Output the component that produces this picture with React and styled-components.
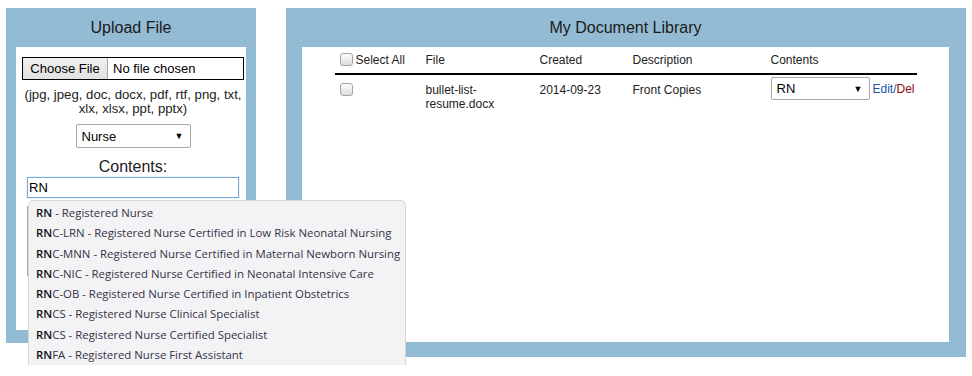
import styled, { createGlobalStyle } from "styled-components";

const GlobalStyle = createGlobalStyle`
    body {
        margin: 0;
        background: #ffffff;
        font-family: "Liberation Sans", Arial, sans-serif;
        color: #222222;
    }
`

const Page = styled.div`
    display: flex;
    align-items: flex-start;
    gap: 30px;
    padding: 8px 6px;
`
const Panel = styled.div`
    width: ${(props) => props.width}px;
    height: ${(props) => props.height}px;
    background-color: #94bbd4;
    display: flex;
    flex-direction: column;
    padding: 0 ${(props) => props.right}px ${(props) => props.bottom}px ${(props) => props.left}px;
    box-sizing: border-box;
`
const PanelTitle = styled.div`
    height: 39px;
    display: flex;
    align-items: center;
    justify-content: center;
    font-size: 16px;
    color: #1a1a1a;
`
const PanelBody = styled.div`
    flex: 1;
    background: #ffffff;
    display: flex;
    flex-direction: column;
    align-items: center;
    padding: ${(props) => props.pad};
    box-sizing: border-box;
`

const FileInput = styled.div`
    width: 222px;
    height: 23px;
    border: 1px solid #000000;
    box-sizing: border-box;
    display: flex;
    align-items: center;
    font-size: 13px;
    color: #000;
`
const FileButton = styled.div`
    height: 21px;
    width: 85px;
    background: linear-gradient(#f0f0f0, #e1e1e1);
    border-right: 1px solid #a7a7a7;
    display: flex;
    align-items: center;
    justify-content: center;
    box-sizing: border-box;
`
const FileName = styled.span`
    padding-left: 5px;
`
const Hint = styled.div`
    margin-top: 8px;
    font-size: 13.2px;
    line-height: 14px;
    text-align: center;
    color: #222;
`
const SelectBox = styled.div`
    width: ${(props) => props.width}px;
    height: ${(props) => props.height}px;
    border: 1px solid #a9a9a9;
    border-radius: 2px;
    box-sizing: border-box;
    display: flex;
    align-items: center;
    justify-content: space-between;
    padding: 0 6px 0 5px;
    font-size: 13px;
    color: #000;
    background: #ffffff;
    margin-top: ${(props) => props.top || 0}px;
`
const Arrow = styled.span`
    font-size: 9px;
`
const ContentsLabel = styled.div`
    margin-top: 10px;
    font-size: 16px;
    line-height: 18px;
`
const InputWrap = styled.div`
    position: relative;
    width: 212px;
    margin-top: 1px;
`
const TextInput = styled.div`
    height: 21px;
    border: 1px solid #7aa7d8;
    box-shadow: 0 0 1px #9cc2ea;
    box-sizing: border-box;
    font-size: 13px;
    color: #000;
    display: flex;
    align-items: center;
    padding-left: 1px;
`
const TextArea = styled.div`
    height: 70px;
    margin-top: 8px;
    border: 1px solid #a9a9a9;
    box-sizing: border-box;
`
const Suggestions = styled.ul`
    position: absolute;
    top: 23px;
    left: 1px;
    width: 378px;
    margin: 0;
    padding: 2px 0 3px;
    list-style: none;
    background: #f3f3f6;
    border: 1px solid #d6d6db;
    border-radius: 5px;
    box-sizing: border-box;
    font-family: "Open Sans", "Noto Sans", sans-serif;
    font-size: 11.4px;
    color: #333344;
    z-index: 10;
`
const Suggestion = styled.li`
    height: 20.3px;
    line-height: 20.3px;
    padding-left: 7px;
    white-space: nowrap;
    b {
        color: #111;
        font-weight: 600;
    }
`

const Table = styled.div`
    width: 582px;
    display: grid;
    grid-template-columns: 91px 114px 93px 138px 1fr;
    font-size: 12px;
    color: #222;
`
const HeadCell = styled.div`
    height: 28px;
    border-bottom: 2px solid #000;
    display: flex;
    align-items: center;
    gap: 3px;
    padding-left: ${(props) => props.pad || 0}px;
    padding-bottom: 1px;
    box-sizing: border-box;
`
const Cell = styled.div`
    padding-top: ${(props) => props.top ?? 8}px;
    padding-left: ${(props) => props.pad || 0}px;
    line-height: 14px;
    display: flex;
    align-items: flex-start;
`
const Check = styled.span`
    display: inline-block;
    width: 13px;
    height: 13px;
    border: 1px solid #a3a3a3;
    border-radius: 3px;
    box-sizing: border-box;
    background: linear-gradient(#fcfcfc, #dedede);
    margin-top: ${(props) => props.top || 0}px;
`
const Edit = styled.a`
    color: #2354a8;
    margin-left: 3px;
    margin-top: 5px;
`
const Del = styled.span`
    color: #8b0a0a;
`

const suggestions = [
    ["RN", "Registered Nurse"],
    ["RNC-LRN", "Registered Nurse Certified in Low Risk Neonatal Nursing"],
    ["RNC-MNN", "Registered Nurse Certified in Maternal Newborn Nursing"],
    ["RNC-NIC", "Registered Nurse Certified in Neonatal Intensive Care"],
    ["RNC-OB", "Registered Nurse Certified in Inpatient Obstetrics"],
    ["RNCS", "Registered Nurse Clinical Specialist"],
    ["RNCS", "Registered Nurse Certified Specialist"],
    ["RNFA", "Registered Nurse First Assistant"],
];

export default function App() {
    return (
        <>
            <GlobalStyle />
            <Page>
                <Panel width={250} height={335} left={10} right={10} bottom={13}>
                    <PanelTitle>Upload File</PanelTitle>
                    <PanelBody pad="10px 2px 0 6px">
                        <FileInput>
                            <FileButton>Choose File</FileButton>
                            <FileName>No file chosen</FileName>
                        </FileInput>
                        <Hint>
                            (jpg, jpeg, doc, docx, pdf, rtf, png, txt,<br />
                            xlx, xlsx, ppt, pptx)
                        </Hint>
                        <SelectBox width={115} height={24} top={8}>
                            Nurse <Arrow>▼</Arrow>
                        </SelectBox>
                        <ContentsLabel>Contents:</ContentsLabel>
                        <InputWrap>
                            <TextInput>RN</TextInput>
                            <TextArea />
                            <Suggestions>
                                {suggestions.map(([code, name], idx) => (
                                    <Suggestion key={idx}>
                                        <b>{code.slice(0, 2)}</b>{code.slice(2)} - {name}
                                    </Suggestion>
                                ))}
                            </Suggestions>
                        </InputWrap>
                    </PanelBody>
                </Panel>
                <Panel width={680} height={349} left={16} right={17} bottom={15}>
                    <PanelTitle>My Document Library</PanelTitle>
                    <PanelBody pad="0">
                        <Table>
                            <HeadCell pad={5}><Check /> Select All</HeadCell>
                            <HeadCell>File</HeadCell>
                            <HeadCell>Created</HeadCell>
                            <HeadCell>Description</HeadCell>
                            <HeadCell>Contents</HeadCell>
                            <Cell pad={5}><Check /></Cell>
                            <Cell>bullet-list-<br />resume.docx</Cell>
                            <Cell>2014-09-23</Cell>
                            <Cell>Front Copies</Cell>
                            <Cell top={2}>
                                <SelectBox width={99} height={23}>
                                    RN <Arrow>▼</Arrow>
                                </SelectBox>
                                <Edit>Edit/<Del>Del</Del></Edit>
                            </Cell>
                        </Table>
                    </PanelBody>
                </Panel>
            </Page>
        </>
    );
}
